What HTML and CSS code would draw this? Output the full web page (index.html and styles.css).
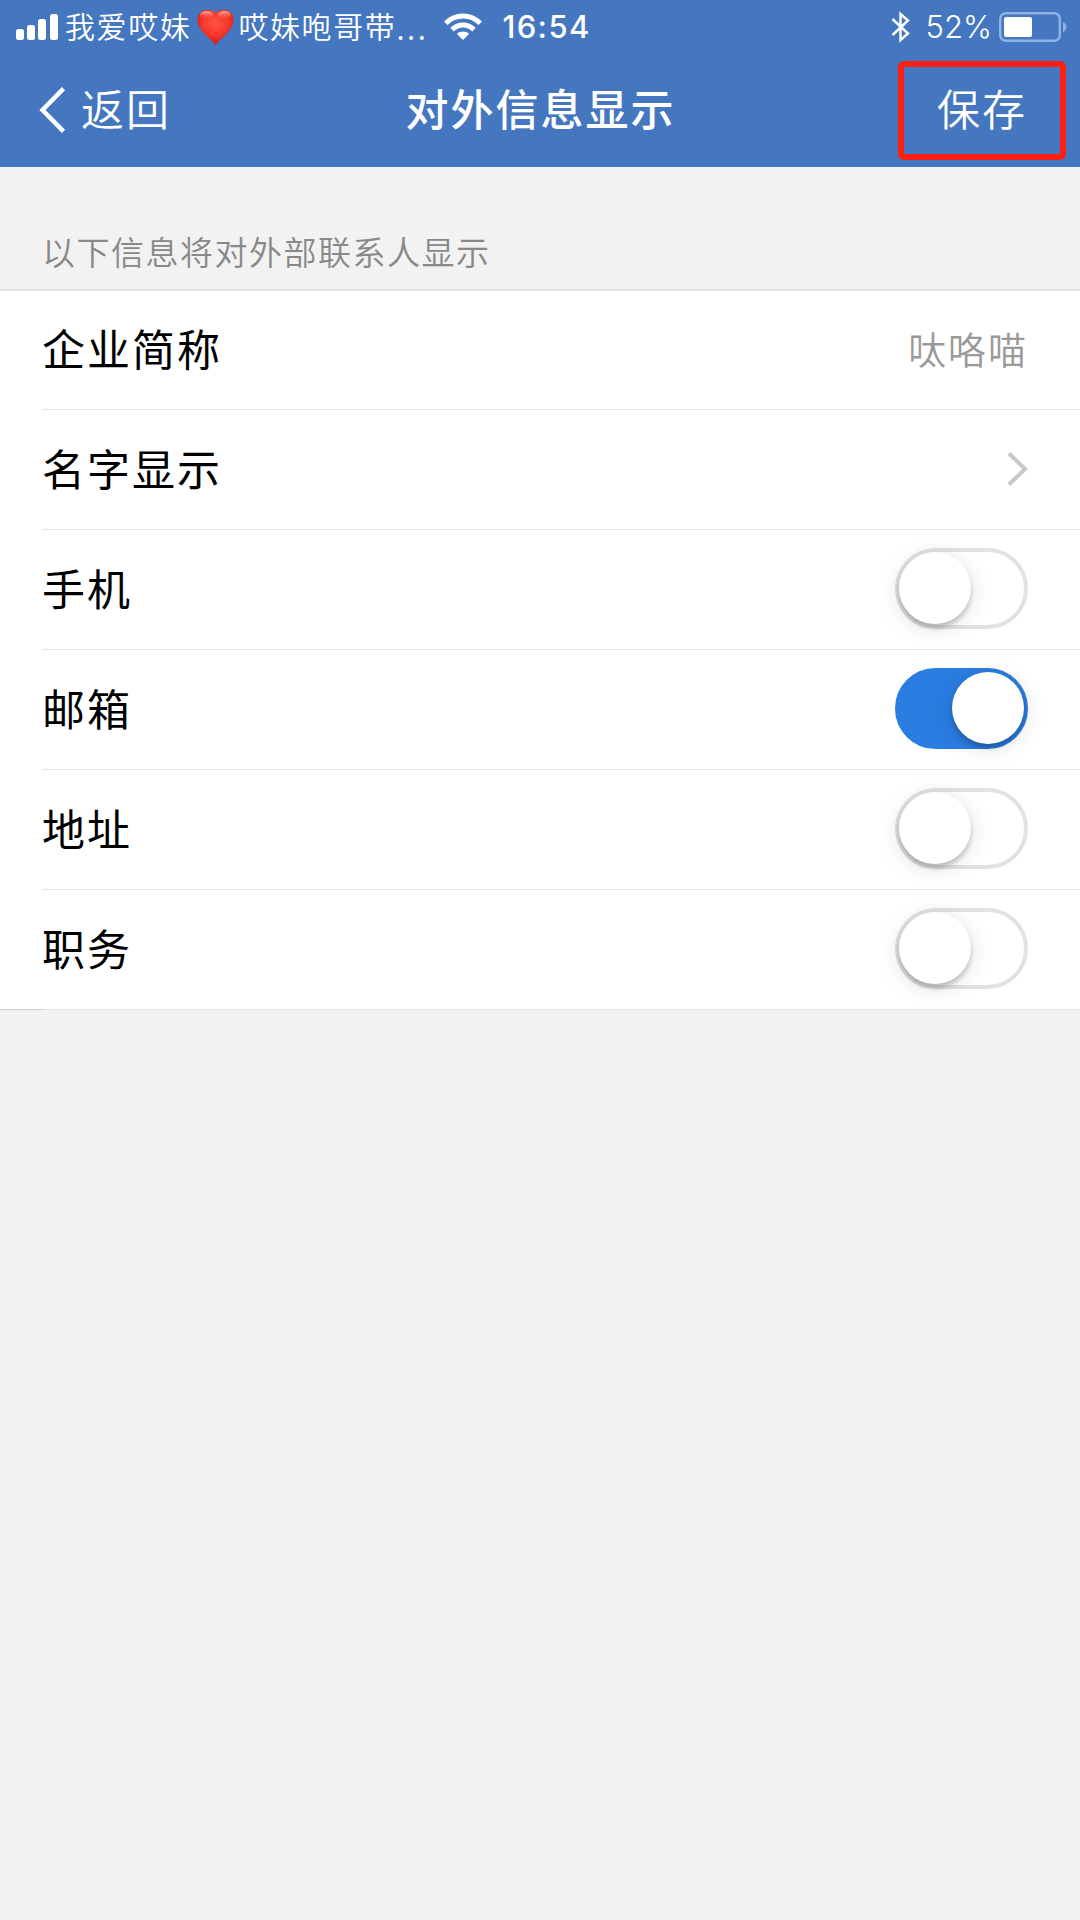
FILE: index.html
```
<!DOCTYPE html>
<html lang="zh-CN">
<head>
  <meta charset="UTF-8" />
  <title>对外信息显示</title>
  <link rel="stylesheet" href="styles.css">
</head>
<body>
  <header>
    <div class="status-bar">
      <svg class="signal" width="42" height="26" viewBox="0 0 42 26" fill="#fff">
        <rect x="0" y="15" width="8" height="11" rx="2.5" />
        <rect x="11" y="11" width="8" height="15" rx="2.5" />
        <rect x="22" y="5" width="8" height="21" rx="2.5" />
        <rect x="34" y="0" width="8" height="26" rx="2.5" />
      </svg>
      <span class="carrier">我爱哎妹</span>
      <svg class="heart" width="37" height="37" viewBox="0 0 37 37">
        <defs>
          <radialGradient id="heartFill" cx="50%" cy="38%" r="62%">
            <stop offset="0" stop-color="#ff5545" />
            <stop offset="0.6" stop-color="#f53527" />
            <stop offset="1" stop-color="#c91d18" />
          </radialGradient>
          <linearGradient id="heartShine" x1="0" y1="0" x2="0" y2="1">
            <stop offset="0" stop-color="#ffb3a5" />
            <stop offset="1" stop-color="#ff5848" stop-opacity="0" />
          </linearGradient>
        </defs>
        <path fill="url(#heartFill)" d="M18.500 36C15 31 8 26.500 4 20.500C1.500 17 .5 14 .5 10.500C.5 5 4.500.7 9.700.7C13.500.7 17 2 18.500 4.500C20 2 23.500.7 27.300.7C32.500.7 36.500 5 36.500 10.500C36.500 14 35.500 17 33 20.500C29 26.500 22 31 18.500 36Z" />
        <ellipse cx="9.500" cy="6" rx="6.500" ry="4" fill="url(#heartShine)" />
        <ellipse cx="27.500" cy="6" rx="6.500" ry="4" fill="url(#heartShine)" />
      </svg>
      <span class="carrier">哎妹咆哥带</span>
      <span class="dots">...</span>
      <svg class="wifi" width="38" height="28" viewBox="0 0 38 28">
        <g fill="none" stroke="#fff" stroke-width="5">
          <path d="M1.800 10.200C11.500.6 26.500.6 36.200 10.200" />
          <path d="M8 16.600C14.500 10.500 23.500 10.500 30 16.600" />
        </g>
        <path fill="#fff" d="M19 27L12.800 20.800C16.500 17.800 21.500 17.800 25.200 20.800Z" />
      </svg>
      <span class="time">16:54</span>
      <svg class="bluetooth" width="20" height="32" viewBox="0 0 20 32" fill="none" stroke="#fff" stroke-width="2.400">
        <path d="M1.500 8L17 22.500L9.500 29V3L17 9.500L1.500 24" />
      </svg>
      <span class="percent">52%</span>
      <svg class="battery" width="68" height="30" viewBox="0 0 68 30">
        <rect x="1.200" y="1.200" width="59.600" height="27.600" rx="5.500" fill="none" stroke="#8fb3e6" stroke-width="2.400" />
        <rect x="5" y="5" width="28" height="20" rx="2" fill="#fff" />
        <path fill="#8fb3e6" d="M64 10C68.500 12 68.500 18 64 20Z" />
      </svg>
    </div>

    <div class="nav">
      <a class="back">
        <svg width="27" height="46" viewBox="0 0 27 46" fill="none" stroke="#fff" stroke-width="4.500">
          <path d="M24.500 1.600L3.500 23L24.500 44.400" />
        </svg>
        <span>返回</span>
      </a>
      <h1>对外信息显示</h1>
      <button class="save">保存</button>
    </div>
  </header>

  <p class="hint">以下信息将对外部联系人显示</p>

  <ul class="list">
    <li>
      <span class="label">企业简称</span>
      <span class="value">呔咯喵</span>
    </li>
    <li>
      <span class="label">名字显示</span>
      <svg class="arrow" width="22" height="34" viewBox="0 0 22 34" fill="none" stroke="#c7c7cc" stroke-width="4">
        <path d="M3 1.500L19 17L3 32.500" />
      </svg>
    </li>
    <li>
      <span class="label">手机</span>
      <span class="switch"></span>
    </li>
    <li>
      <span class="label">邮箱</span>
      <span class="switch on"></span>
    </li>
    <li>
      <span class="label">地址</span>
      <span class="switch"></span>
    </li>
    <li>
      <span class="label">职务</span>
      <span class="switch"></span>
    </li>
  </ul>
</body>
</html>
```
FILE: styles.css
```
* {
  box-sizing: border-box;
}
body {
  margin: 0;
  min-height: 1920px;
  background: #f2f2f2;
  font-family: "Noto Sans CJK SC", sans-serif;
}
header {
  height: 167px;
  background: #4477bf;
  color: #fff;
}
.status-bar {
  display: flex;
  align-items: center;
  height: 53px;
  padding: 0 13px 0 16px;
  white-space: nowrap;
}
.carrier {
  padding-bottom: 2px;
  font-size: 30px;
  font-weight: 350;
  letter-spacing: 1.6px;
  line-height: 51px;
}
.signal {
  margin-right: 7px;
}
.heart {
  margin: 2px 4px 0 6px;
}
.dots {
  font-size: 30px;
  font-weight: 350;
  letter-spacing: 2.6px;
}
.wifi {
  margin: 0 20px 0 16px;
}
.time {
  font-family: Inter, sans-serif;
  font-size: 31px;
  font-weight: 500;
  letter-spacing: 1.4px;
}
.bluetooth {
  margin-left: auto;
}
.percent {
  margin: 0 7px 0 15px;
  font-family: Inter, sans-serif;
  font-size: 31px;
  font-weight: 300;
}
.nav {
  display: grid;
  grid-template-columns: 1fr 270px 1fr;
  align-items: center;
  height: 114px;
  padding: 0 14px 0 39px;
}
.back {
  display: flex;
  align-items: center;
  gap: 15px;
  font-size: 43px;
  font-weight: 350;
  letter-spacing: 2px;
}
.back span {
  padding-bottom: 6px;
}
h1 {
  margin: 0 0 0 -12px;
  padding-bottom: 6px;
  font-size: 43px;
  font-weight: 500;
  letter-spacing: 2px;
  white-space: nowrap;
}
.save {
  justify-self: end;
  width: 168px;
  height: 99px;
  padding: 0 0 6px;
  border: 6px solid #ff1e10;
  border-radius: 6px;
  background: none;
  color: #fff;
  font-family: inherit;
  font-size: 43px;
  font-weight: 350;
  letter-spacing: 2px;
}
.hint {
  height: 122px;
  margin: 0;
  padding: 60px 42px 0;
  color: #888;
  font-size: 33px;
  font-weight: 350;
  letter-spacing: 1.5px;
  line-height: 48px;
}
.list {
  margin: 0;
  padding: 0;
  list-style: none;
  border-top: 2px solid #e2e2e2;
  background: linear-gradient(#ccc, #ccc) left bottom / 42px 1px no-repeat #fff;
}
.list li {
  display: flex;
  align-items: center;
  justify-content: space-between;
  height: 120px;
  margin-left: 42px;
  padding: 0 52px 2px 0;
  border-bottom: 1px solid #e2e2e2;
  color: #000;
}
.list li:first-child {
  height: 119px;
}
.label {
  padding-bottom: 4px;
  font-size: 43px;
  letter-spacing: 2px;
}
.value {
  padding-bottom: 4px;
  color: #999;
  font-size: 38px;
  font-weight: 350;
  letter-spacing: 2px;
}
.switch {
  width: 133px;
  height: 81px;
  border: 4px solid #e2e2e2;
  border-radius: 41px;
}
.switch::before {
  content: "";
  display: block;
  width: 72px;
  height: 72px;
  border-radius: 50%;
  background: #fff;
  box-shadow: 0 4px 5px rgba(0, 0, 0, 0.2), 0 4px 24px rgba(0, 0, 0, 0.12);
}
.switch.on {
  border-color: #2a7de1;
  background: #2a7de1;
}
.switch.on::before {
  margin-left: auto;
}
```
